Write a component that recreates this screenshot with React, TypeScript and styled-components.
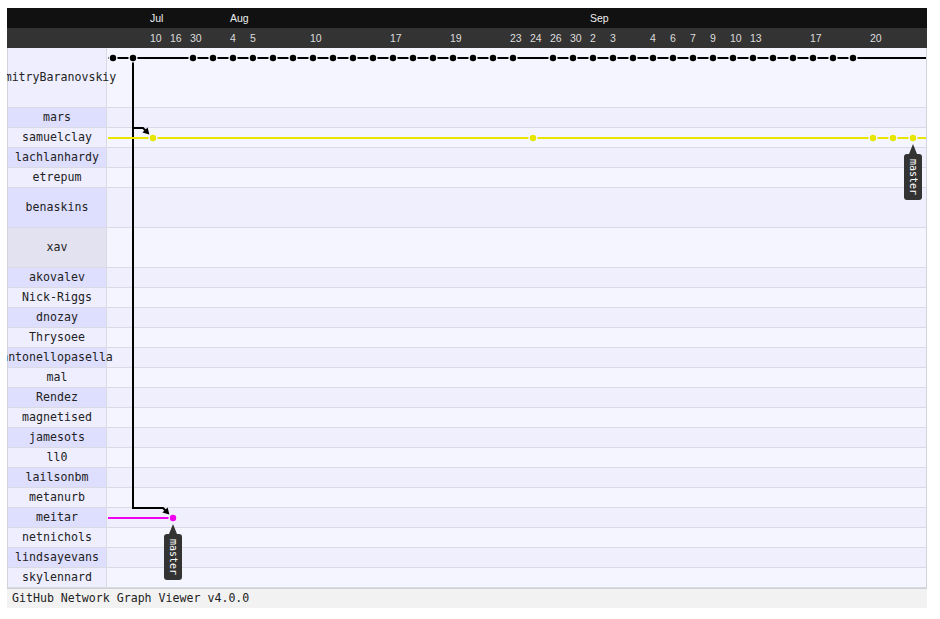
import React from "react";
import styled, { createGlobalStyle } from "styled-components";

const GlobalStyle = createGlobalStyle`
  html, body { margin: 0; padding: 0; background: #ffffff; }
  body { font-family: "Liberation Sans", Arial, sans-serif; }
`;

const COL = 20;
const OFFSET = 5;
const LANE_W = 818;

type Person = { name: string; h: number; special?: boolean };

const people: Person[] = [
  { name: "DmitryBaranovskiy", h: 60 },
  { name: "mars", h: 20 },
  { name: "samuelclay", h: 20 },
  { name: "lachlanhardy", h: 20 },
  { name: "etrepum", h: 20 },
  { name: "benaskins", h: 40 },
  { name: "xav", h: 40, special: true },
  { name: "akovalev", h: 20 },
  { name: "Nick-Riggs", h: 20 },
  { name: "dnozay", h: 20 },
  { name: "Thrysoee", h: 20 },
  { name: "antonellopasella", h: 20 },
  { name: "mal", h: 20 },
  { name: "Rendez", h: 20 },
  { name: "magnetised", h: 20 },
  { name: "jamesots", h: 20 },
  { name: "ll0", h: 20 },
  { name: "lailsonbm", h: 20 },
  { name: "metanurb", h: 20 },
  { name: "meitar", h: 20 },
  { name: "netnichols", h: 20 },
  { name: "lindsayevans", h: 20 },
  { name: "skylennard", h: 20 },
];

const rowTops: number[] = [];
{
  let t = 0;
  for (const p of people) {
    rowTops.push(t);
    t += p.h;
  }
}

const laneColor = (i: number) => (i % 2 === 0 ? "#f5f5ff" : "#efeffd");
const nameColor = (i: number, special?: boolean) =>
  special ? "#e2e2f0" : i % 2 === 0 ? "#eeeeff" : "#dedeff";

const months: Record<number, string> = { 2: "Jul", 6: "Aug", 24: "Sep" };
const days: Record<number, string> = {
  2: "10", 3: "16", 4: "30", 6: "4", 7: "5", 10: "10", 14: "17", 17: "19",
  20: "23", 21: "24", 22: "26", 23: "30", 24: "2", 25: "3", 27: "4", 28: "6",
  29: "7", 30: "9", 31: "10", 32: "13", 35: "17", 38: "20",
};
const columns = Array.from({ length: 41 }, (_, i) => i);

const cx = (col: number) => OFFSET + COL * col;
const cy = (row: number) => rowTops[row] + 10;

const range = (a: number, b: number) =>
  Array.from({ length: b - a + 1 }, (_, i) => a + i);

const branches = [
  { row: 0, color: "#000000", from: 0, to: LANE_W, dots: [0, 1, ...range(4, 20), ...range(22, 37)] },
  { row: 2, color: "#e6e600", from: 0, to: LANE_W, dots: [2, 21, 38, 39, 40] },
  { row: 19, color: "#f000f0", from: 0, to: cx(3), dots: [3] },
];

const merges = [
  { parentCol: 1, row: 2, col: 2 },
  { parentCol: 1, row: 19, col: 3 },
];

const tags = [
  { row: 2, col: 40, label: "master" },
  { row: 19, col: 3, label: "master" },
];

const Viewer = styled.div`
  margin: 8px 0 0 7px;
  width: 920px;
  height: 600px;
  overflow: hidden;
  display: flex;
  flex-direction: column;
`;

const AxisRow = styled.div<{ $dark: boolean }>`
  flex: 0 0 20px;
  display: flex;
  padding-left: 103px;
  background: ${(p) => (p.$dark ? "#111111" : "#333333")};
  color: ${(p) => (p.$dark ? "#eeeeee" : "#dddddd")};
  font-family: "Liberation Sans", Arial, sans-serif;
  font-size: 10.5px;
  line-height: 20px;
`;

const Tick = styled.div`
  flex: 0 0 ${COL}px;
  white-space: nowrap;
  overflow: visible;
`;

const Body = styled.div`
  position: relative;
  flex: 0 0 540px;
  border-left: 1px solid #d2d2dc;
  border-right: 1px solid #d2d2dc;
  display: flex;
  flex-direction: column;
`;

const Row = styled.div<{ $h: number }>`
  flex: 0 0 ${(p) => p.$h}px;
  box-sizing: border-box;
  display: flex;
  border-bottom: 1px solid #dadae4;
`;

const NameCell = styled.div<{ $bg: string }>`
  flex: 0 0 99px;
  width: 99px;
  min-width: 0;
  box-sizing: border-box;
  display: flex;
  align-items: center;
  justify-content: center;
  padding-bottom: 2px;
  background: ${(p) => p.$bg};
  border-right: 1px solid #dadae4;
  white-space: nowrap;
  overflow: visible;
`;

const NameText = styled.span`
  position: relative;
  z-index: 1;
  flex: none;
  font-family: "DejaVu Sans Mono", "Liberation Mono", monospace;
  font-size: 11.6px;
  color: #222222;
`;

const Lane = styled.div<{ $bg: string }>`
  flex: 1;
  background: ${(p) => p.$bg};
`;

const GraphSvg = styled.svg`
  position: absolute;
  left: 100px;
  top: 0;
  z-index: 2;
  pointer-events: none;
  overflow: visible;
`;

const Tag = styled.div`
  position: absolute;
  z-index: 3;
  width: 18px;
  display: flex;
  flex-direction: column;
  align-items: center;
`;

const TagPointer = styled.div`
  width: 0;
  height: 0;
  border-left: 4px solid transparent;
  border-right: 4px solid transparent;
  border-bottom: 10px solid #333333;
`;

const TagBox = styled.div`
  width: 18px;
  height: 46px;
  box-sizing: border-box;
  border-radius: 3px;
  background: #333333;
  color: #ffffff;
  display: flex;
  align-items: center;
  justify-content: center;
  writing-mode: vertical-rl;
  font-family: "DejaVu Sans Mono", "Liberation Mono", monospace;
  font-size: 10px;
  line-height: 18px;
`;

const Footer = styled.div`
  flex: 0 0 20px;
  box-sizing: border-box;
  border-top: 1px solid #cfcfd4;
  background: #f2f2f2;
  padding-left: 5px;
  font-family: "DejaVu Sans Mono", "Liberation Mono", monospace;
  font-size: 11.6px;
  line-height: 19px;
  color: #222222;
  white-space: nowrap;
`;

function Arrow({ x, y, color }: { x: number; y: number; color: string }) {
  const tipX = x - 3.6;
  const tipY = y - 3.6;
  const bx = x - 8;
  const by = y - 8;
  const h = 2.6;
  return (
    <polygon
      points={`${tipX},${tipY} ${bx + h},${by - h} ${bx - h},${by + h}`}
      fill={color}
    />
  );
}

function Graph() {
  return (
    <GraphSvg width={LANE_W} height={540} viewBox={`0 0 ${LANE_W} 540`}>
      {merges.map((m, i) => {
        const x = cx(m.col);
        const y = cy(m.row);
        const px = cx(m.parentCol);
        return (
          <g key={i}>
            <path
              d={`M${px},${cy(0)} V${y - 10} H${x - 10} L${x - 6},${y - 6}`}
              fill="none"
              stroke="#000"
              strokeWidth={2}
            />
            <Arrow x={x} y={y} color="#000" />
          </g>
        );
      })}
      {branches.map((b, i) => {
        const y = cy(b.row);
        const ring = laneColor(b.row);
        return (
          <g key={i}>
            <line x1={b.from} y1={y} x2={b.to} y2={y} stroke={b.color} strokeWidth={2} />
            {b.dots.map((d) => (
              <g key={d}>
                <circle cx={cx(d)} cy={y} r={4.6} fill={ring} />
                <circle cx={cx(d)} cy={y} r={3.2} fill={b.color} />
              </g>
            ))}
          </g>
        );
      })}
    </GraphSvg>
  );
}

export default function App() {
  return (
    <>
      <GlobalStyle />
      <Viewer>
        <AxisRow $dark>
          {columns.map((c) => (
            <Tick key={c}>{months[c] ?? ""}</Tick>
          ))}
        </AxisRow>
        <AxisRow $dark={false}>
          {columns.map((c) => (
            <Tick key={c}>{days[c] ?? ""}</Tick>
          ))}
        </AxisRow>
        <Body>
          {people.map((p, i) => (
            <Row key={p.name} $h={p.h}>
              <NameCell $bg={nameColor(i, p.special)}>
                <NameText>{p.name}</NameText>
              </NameCell>
              <Lane $bg={laneColor(i)} />
            </Row>
          ))}
          <Graph />
          {tags.map((t, i) => (
            <Tag
              key={i}
              style={{ left: 100 + cx(t.col) - 9, top: cy(t.row) + 6 }}
            >
              <TagPointer />
              <TagBox>{t.label}</TagBox>
            </Tag>
          ))}
        </Body>
        <Footer>GitHub Network Graph Viewer v4.0.0</Footer>
      </Viewer>
    </>
  );
}
